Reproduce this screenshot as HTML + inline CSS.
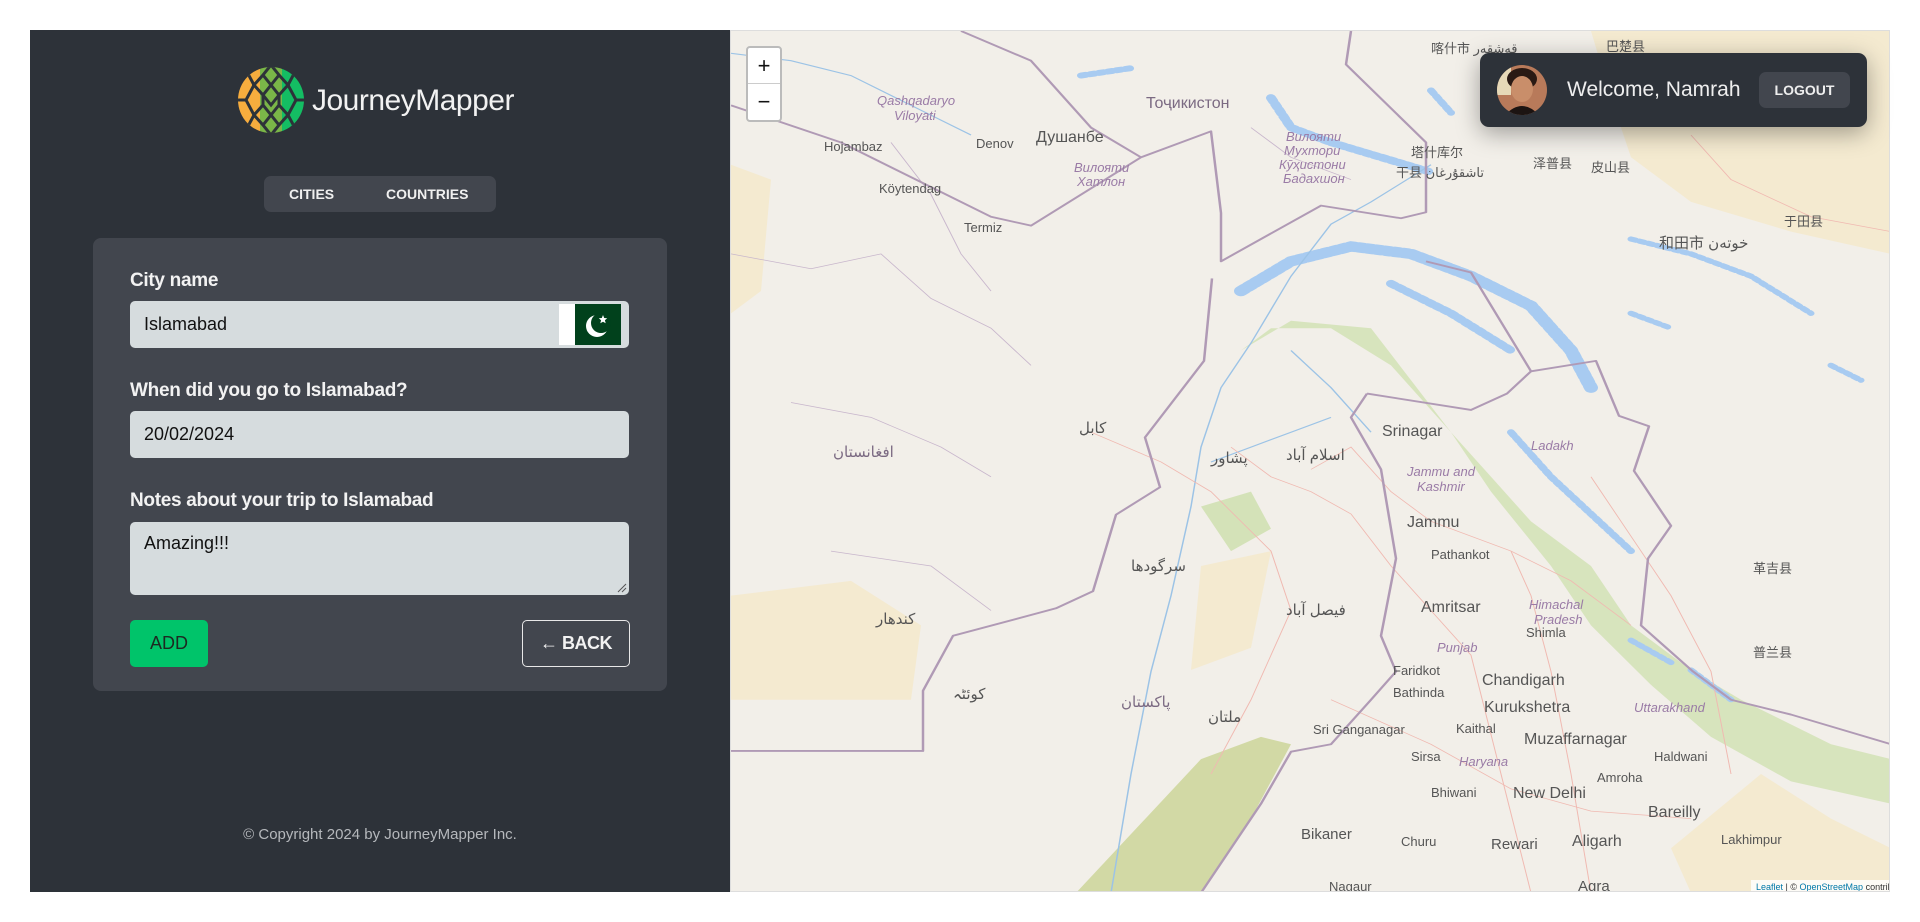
<!DOCTYPE html>
<html><head><meta charset="utf-8"><style>
*{box-sizing:border-box;margin:0;padding:0}
body{width:1920px;height:922px;background:#fff;font-family:"Liberation Sans",sans-serif;position:relative;overflow:hidden}
.side{position:absolute;left:30px;top:30px;width:700px;height:862px;background:#2d3239}
.abs{position:absolute}
.tabs{left:234px;top:146px;width:232px;height:36px;background:#42464e;border-radius:7px;color:#f0f0f0;font-weight:bold;font-size:14px}
.card{left:63px;top:208px;width:574px;height:453px;background:#42464e;border-radius:8px}
.lbl{color:#f2f2f2;font-weight:bold;font-size:19px;position:absolute;left:37px;letter-spacing:-0.3px}
.inp{position:absolute;left:37px;width:499px;background:#d6dcde;border-radius:5px;font-size:18px;color:#111;padding-left:14px}
.map{left:730px;top:30px;width:1160px;height:862px;background:#f2efe9;overflow:hidden;border:1px solid #ddd}
.ml{font-family:"Liberation Sans","DejaVu Sans","Noto Sans CJK SC",sans-serif}
</style></head><body>
<div class="side">
  <svg class="abs" style="left:206px;top:35px" width="70" height="70" viewBox="0 0 70 70">
    <defs><clipPath id="c"><circle cx="35" cy="35" r="33"/></clipPath></defs>
    <g clip-path="url(#c)">
      <rect x="0" y="0" width="24" height="70" fill="#f7ad3e"/>
      <rect x="24" y="0" width="22" height="70" fill="#7ab648"/>
      <rect x="46" y="0" width="24" height="70" fill="#14bd63"/>
      <g stroke="#2d3239" stroke-width="3" fill="none">
        <path d="M35 0 L27 10 L35 20 L43 10 Z M27 10 L18 20 L27 30 L35 20 M43 10 L52 20 L43 30 L35 20"/>
        <path d="M27 30 L35 40 L43 30 M18 20 L10 35 L18 50 L27 40 L27 30 M52 20 L60 35 L52 50 L43 40 L43 30"/>
        <path d="M27 40 L35 50 L43 40 M18 50 L27 60 L35 50 L43 60 L52 50 M27 60 L35 70 L43 60 M10 35 L0 35 M60 35 L70 35 M18 20 L10 5 M52 20 L60 5 M18 50 L10 65 M52 50 L60 65"/>
      </g>
    </g>
  </svg>
  <div class="abs" style="left:282px;top:54px;color:#f2f2f2;font-size:30px;letter-spacing:-0.5px">JourneyMapper</div>
  <div class="abs tabs"><span class="abs" style="left:25px;top:10px">CITIES</span><span class="abs" style="left:122px;top:10px">COUNTRIES</span></div>
  <div class="abs card">
    <div class="lbl" style="top:32px">City name</div>
    <div class="inp" style="top:63px;height:47px;line-height:47px">Islamabad
      <svg class="abs" style="right:8px;top:3px" width="62" height="41" viewBox="0 0 62 41"><rect width="16" height="41" fill="#fff"/><rect x="16" width="46" height="41" fill="#01411c"/><circle cx="38" cy="22" r="11" fill="#fff"/><circle cx="42" cy="19" r="10" fill="#01411c"/><path d="M44 11 l1.2 3 3 .3 -2.3 2 .8 3 -2.7-1.6 -2.7 1.6 .8-3 -2.3-2 3-.3z" fill="#fff"/></svg>
    </div>
    <div class="lbl" style="top:142px">When did you go to Islamabad?</div>
    <div class="inp" style="top:173px;height:47px;line-height:47px">20/02/2024</div>
    <div class="lbl" style="top:252px">Notes about your trip to Islamabad</div>
    <div class="inp" style="top:284px;height:73px;padding-top:11px">Amazing!!!
      <svg class="abs" style="right:2px;bottom:2px" width="10" height="10"><path d="M1 9 L9 1 M5 9 L9 5" stroke="#555" stroke-width="1"/></svg>
    </div>
    <div class="abs" style="left:37px;top:382px;width:78px;height:47px;background:#00c46a;border-radius:5px;color:#1c2a22;font-size:18px;line-height:47px;text-align:center">ADD</div>
    <div class="abs" style="left:429px;top:382px;width:108px;height:47px;border:1px solid #e8e8e8;border-radius:5px;color:#f2f2f2;font-size:18px;font-weight:bold;line-height:45px;text-align:center;letter-spacing:-0.5px">← BACK</div>
  </div>
  <div class="abs" style="left:0;width:700px;top:796px;text-align:center;color:#b5b8bc;font-size:15px">© Copyright 2024 by JourneyMapper Inc.</div>
</div>

<div class="abs map">
<svg width="1160" height="862" viewBox="0 0 1160 862" class="ml">
 <g transform="scale(1,0.743)">
  <path d="M860 0 L1160 0 L1160 300 L1060 270 L960 230 L900 170 L880 90 Z" fill="#f4ead0"/>
  <path d="M0 180 L40 200 L30 350 L0 380 Z" fill="#f4ead0"/>
  <path d="M0 760 L120 740 L190 800 L180 900 L0 900 Z" fill="#f4ead0"/>
  <path d="M470 720 L540 700 L520 830 L460 860 Z" fill="#f4ead0"/>
  <path d="M345 1160 L470 980 L530 950 L560 960 L520 1060 L470 1160 Z" fill="#d2d9a5"/>
  <path d="M940 1100 L1030 1000 L1100 1060 L1160 1100 L1160 1160 L960 1160 Z" fill="#f4ead0"/>
  <path d="M510 430 L560 390 L640 400 L680 470 L720 540 L760 600 L800 660 L860 720 L900 800 L960 860 L1010 900 L1100 960 L1160 980 L1160 1040 L1060 1010 L980 950 L920 880 L860 800 L820 720 L760 620 L720 540 L660 450 L600 400 L540 400 Z" fill="#d4e2b8" opacity=".9"/>
  <path d="M470 640 L520 620 L540 670 L500 700 Z" fill="#d4e2b8"/>
  <g stroke="#a8cbf1" stroke-linecap="round" fill="none" stroke-dasharray="5 4">
    <path d="M510 350 L560 310 L620 290 L680 300 L740 330 L800 370 L840 430 L860 480" stroke-width="14"/>
    <path d="M660 340 L720 380 L780 430" stroke-width="10"/>
    <path d="M540 90 L560 130 L600 150 L650 170 L700 190" stroke-width="10"/>
    <path d="M700 80 L720 110 M760 60 L780 90 M350 60 L400 50" stroke-width="8"/>
    <path d="M780 540 L820 600 L860 650 L900 700" stroke-width="8"/>
    <path d="M900 280 L960 300 L1020 330 L1080 380 M900 380 L940 400 M1100 450 L1130 470" stroke-width="7"/>
    <path d="M900 820 L940 850 M960 860 L1000 900" stroke-width="7"/>
  </g>
  <g stroke="#9cc3e6" stroke-width="1.5" fill="none">
    <path d="M700 180 L640 230 L600 260 L560 330 L520 420 L490 480 L470 560 L460 640 L440 760 L420 862 L400 1000 L380 1160"/>
    <path d="M480 580 L520 560 L560 540 L600 520"/>
    <path d="M560 430 L600 480 L640 540"/>
    <path d="M0 30 L60 40 L120 60 L180 100 L240 140"/>
  </g>
  <g stroke="#f0b9b1" stroke-width="1" fill="none">
    <path d="M500 560 L540 600 L580 620 L620 650 L660 720 L700 780 L740 840 L770 1000 L800 1160"/>
    <path d="M580 590 L620 560 L660 620 L700 660 L780 700 L840 740 L900 800"/>
    <path d="M360 540 L430 580 L480 620 L540 700 L560 780 L520 900 L480 1000"/>
    <path d="M780 700 L800 760 L820 862 L840 1000 L860 1160 M860 600 L900 680 L940 760 L980 862 L1000 1000"/>
    <path d="M960 140 L1000 200 L1080 250 L1160 270"/>
    <path d="M600 900 L700 960 L780 1020 L860 1050 L960 1060"/>
  </g>
  <g stroke="#c8b6cc" stroke-width="1" fill="none">
    <path d="M0 300 L80 320 L150 300 L200 360 L260 400 L300 450 M160 150 L200 220 L230 300 L260 350 M60 500 L140 520 L210 560 L260 600 M520 130 L560 170 L620 200 M100 700 L200 720 L260 780"/>
  </g>
  <g stroke="#b09ab5" stroke-width="2.5" fill="none" stroke-linejoin="round">
    <path d="M481 333 L473 444 L414 547 L429 614 L385 651 L362 754 L325 777 L222 814 L192 888 L192 969 L0 969"/>
    <path d="M0 100 L110 150 L260 250 L300 262 L410 170 L480 135 L490 245 L490 310 L590 235 L670 252 L695 244 L695 150 L615 45 L620 0"/>
    <path d="M410 170 L360 130 L300 40 L230 0"/>
    <path d="M636 488 L620 520 L650 590 L665 710 L650 814 L665 862 L640 900 L600 960 L560 970 L530 1040 L470 1160"/>
    <path d="M636 488 L740 510 L776 488 L800 458 L740 325 L695 310"/>
    <path d="M800 458 L865 444 L888 518 L918 532 L903 592 L940 666 L917 710 L910 800 L962 862 L1000 900 L1060 920 L1160 960"/>
  </g>
 </g>
  <g font-size="13" fill="#555">
    <text x="93" y="120">Hojambaz</text><text x="245" y="117">Denov</text>
    <text x="305" y="111" font-size="16">Душанбе</text>
    <text x="415" y="77" font-size="16" fill="#7b6a82">Тоҷикистон</text>
    <text x="148" y="162">Köytendag</text><text x="233" y="201">Termiz</text>
    <text x="146" y="74" fill="#9a7ba6" font-style="italic">Qashqadaryo</text>
    <text x="163" y="89" fill="#9a7ba6" font-style="italic">Viloyati</text>
    <text x="343" y="141" fill="#9a7ba6" font-style="italic">Вилояти</text>
    <text x="346" y="155" fill="#9a7ba6" font-style="italic">Хатлон</text>
    <text x="555" y="110" fill="#9a7ba6" font-style="italic">Вилояти</text>
    <text x="553" y="124" fill="#9a7ba6" font-style="italic">Мухтори</text>
    <text x="548" y="138" fill="#9a7ba6" font-style="italic">Кӯҳистони</text>
    <text x="552" y="152" fill="#9a7ba6" font-style="italic">Бадахшон</text>
    <text x="700" y="22">喀什市 قەشقەر</text><text x="875" y="20">巴楚县</text>
    <text x="680" y="126">塔什库尔</text><text x="665" y="146">干县 تاشقۇرغان</text>
    <text x="802" y="137">泽普县</text><text x="860" y="141">皮山县</text>
    <text x="928" y="217" font-size="15">和田市 خوتەن</text><text x="1053" y="195">于田县</text>
    <text x="102" y="426" font-size="15" fill="#7b6a82">افغانستان</text>
    <text x="348" y="402" font-size="15">كابل</text>
    <text x="480" y="432" font-size="15">پشاور</text>
    <text x="555" y="429" font-size="15">اسلام آباد</text>
    <text x="651" y="405" font-size="16">Srinagar</text>
    <text x="676" y="496" font-size="16">Jammu</text>
    <text x="700" y="528">Pathankot</text>
    <text x="690" y="581" font-size="16">Amritsar</text>
    <text x="795" y="606">Shimla</text>
    <text x="751" y="654" font-size="16">Chandigarh</text>
    <text x="753" y="681" font-size="16">Kurukshetra</text>
    <text x="662" y="644">Faridkot</text><text x="662" y="666">Bathinda</text>
    <text x="582" y="703">Sri Ganganagar</text><text x="725" y="702">Kaithal</text>
    <text x="793" y="713" font-size="16">Muzaffarnagar</text>
    <text x="680" y="730">Sirsa</text>
    <text x="923" y="730">Haldwani</text><text x="866" y="751">Amroha</text>
    <text x="700" y="766">Bhiwani</text>
    <text x="782" y="767" font-size="16">New Delhi</text>
    <text x="917" y="786" font-size="16">Bareilly</text>
    <text x="570" y="808" font-size="15">Bikaner</text>
    <text x="760" y="818" font-size="15">Rewari</text>
    <text x="841" y="815" font-size="16">Aligarh</text>
    <text x="990" y="813">Lakhimpur</text>
    <text x="670" y="815">Churu</text>
    <text x="847" y="860" font-size="15">Agra</text>
    <text x="598" y="860">Nagaur</text>
    <text x="798" y="578" fill="#9a7ba6" font-style="italic">Himachal</text>
    <text x="803" y="593" fill="#9a7ba6" font-style="italic">Pradesh</text>
    <text x="800" y="419" fill="#9a7ba6" font-style="italic">Ladakh</text>
    <text x="676" y="445" fill="#9a7ba6" font-style="italic">Jammu and</text>
    <text x="686" y="460" fill="#9a7ba6" font-style="italic">Kashmir</text>
    <text x="706" y="621" fill="#9a7ba6" font-style="italic">Punjab</text>
    <text x="728" y="735" fill="#9a7ba6" font-style="italic">Haryana</text>
    <text x="903" y="681" fill="#9a7ba6" font-style="italic">Uttarakhand</text>
    <text x="400" y="540" font-size="15">سرگودھا</text><text x="555" y="584" font-size="15">فيصل آباد</text>
    <text x="390" y="676" font-size="15" fill="#7b6a82">پاکستان</text><text x="477" y="691" font-size="15">ملتان</text>
    <text x="222" y="668" font-size="15">کوئٹہ</text><text x="145" y="593" font-size="15">كندهار</text>
    <text x="1022" y="542">革吉县</text><text x="1022" y="626">普兰县</text>
  </g>
  <rect x="1020" y="849" width="140" height="13" fill="rgba(255,255,255,.8)"/>
  <text x="1025" y="859" font-size="9" fill="#333"><tspan fill="#0078a8">Leaflet</tspan> | © <tspan fill="#0078a8">OpenStreetMap</tspan> contributors</text>
</svg>
  <div class="abs" style="left:15px;top:15px;width:36px;height:76px;background:#fff;border:2px solid #bbb;border-radius:4px;font-size:22px;color:#111;text-align:center">
    <div style="height:36px;line-height:36px;border-bottom:1px solid #ccc">+</div><div style="line-height:36px">−</div>
  </div>
</div>

<div class="abs" style="left:1480px;top:53px;width:387px;height:74px;background:#2d3239;border-radius:9px;box-shadow:0 6px 24px rgba(0,0,0,.35)">
  <svg class="abs" style="left:17px;top:12px" width="50" height="50" viewBox="0 0 50 50"><defs><clipPath id="a"><circle cx="25" cy="25" r="25"/></clipPath></defs><g clip-path="url(#a)"><rect width="50" height="50" fill="#b87a5a"/><rect x="0" y="0" width="14" height="30" fill="#e6d9b8"/><ellipse cx="25" cy="14" rx="15" ry="11" fill="#2a1a14"/><ellipse cx="25" cy="24" rx="11" ry="13" fill="#c98e6a"/><path d="M8 50 Q25 32 42 50 Z" fill="#1c1412"/></g></svg>
  <div class="abs" style="left:87px;top:25px;color:#eee;font-size:21px">Welcome, Namrah</div>
  <div class="abs" style="left:279px;top:19px;width:91px;height:36px;background:#42464e;border-radius:7px;color:#eee;font-size:14px;font-weight:bold;line-height:36px;text-align:center">LOGOUT</div>
</div>
</body></html>
